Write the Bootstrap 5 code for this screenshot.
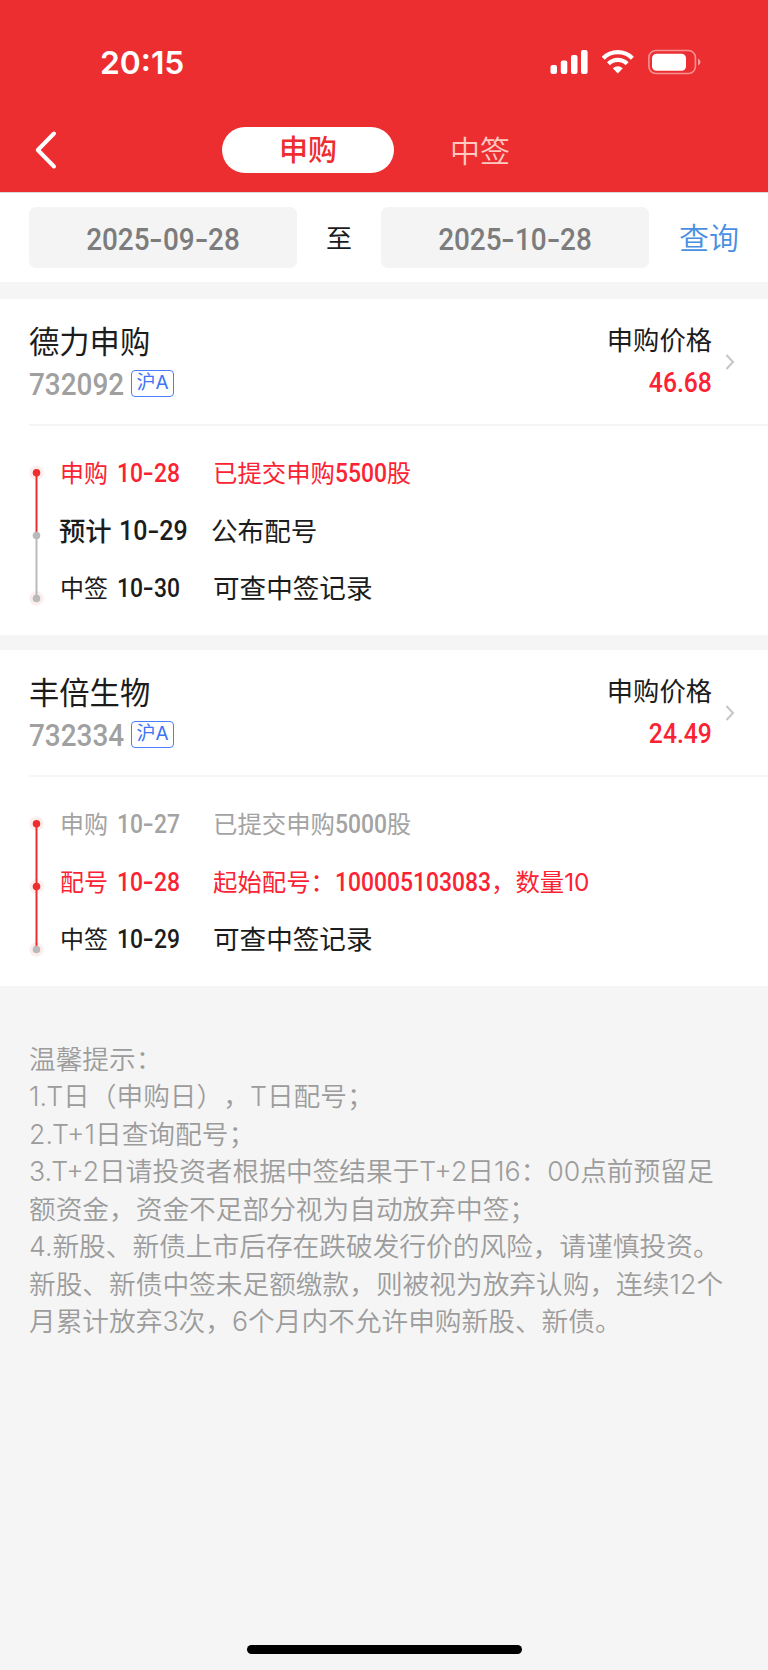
<!DOCTYPE html>
<html lang="zh-CN">
<head>
<meta charset="utf-8">
<meta name="viewport" content="width=device-width, initial-scale=1">
<title>申购</title>
<link href="https://cdn.jsdelivr.net/npm/bootstrap@5.3.0/dist/css/bootstrap.min.css" rel="stylesheet">
<style>
body{background:#f5f5f5;font-family:Inter,"Noto Sans CJK SC",sans-serif;color:#1c1c1c;min-height:1670px;overflow-x:hidden;text-spacing-trim:space-all}
.app-head{background:#ed2e31;height:192px;color:#fff}
.status-row{height:124px;padding:0 66px 0 100px}
.clock{font-size:31.8px;font-weight:600;line-height:40px;padding-top:1px}
.tab-row{height:52px;padding-left:34px}
.back-btn{width:24px;height:40px;margin-right:164px}
.tab-pill{width:172px;height:46px;line-height:48px;font-size:29px;text-align:center}
.tab-on{background:#fff;color:#ed2e31;font-weight:500}
.tab-off{color:#ffc9c2;font-weight:350;font-size:30px}
.din{font-family:Roboto,"Noto Sans CJK SC",sans-serif;font-weight:500;display:inline-block;transform:scaleX(.915);transform-origin:left}
.hy{display:inline-block;width:.48em;text-align:center;transform:scaleX(1.4)}
.filter-row{height:90px;padding:0 29px;border-top:1px solid #d9d9d9}
.date-box{width:268px;height:61px;line-height:63px;background:#f4f4f4;border-radius:7px;color:#7c7c7c;font-size:30.5px;text-align:center}
.date-box .din{transform-origin:center;font-weight:500}
.to-lbl{width:84px;font-size:26px;text-align:center;padding-top:2px}
.query{width:90px;font-size:30px;color:#4a90e2;text-align:right;padding-top:2px;font-weight:350}
.stock{height:336px;background:#fff}
.stock-top{height:127px;margin-left:29px;padding:22px 30px 0 0;border-bottom:2px solid #f5f5f5}
.s-name{font-size:30.3px;line-height:42px}
.s-code{font-size:30.5px;line-height:44px;color:#a0a0a0;margin-right:-9px}
.s-tag{height:27px;width:43px;border:1.5px solid #4a7dff;border-radius:4px;color:#3d73f5;font-size:19px;line-height:24px;text-align:center;margin:-3px 0 0 7px}
.p-lbl{font-size:26.3px;line-height:40px}
.p-val{font-size:27px;line-height:44px;color:#fb2333}
.p-val .din{transform-origin:right}
.chev{margin-left:13px;margin-right:3px}
.steps{padding:19px 0 0 28px}
.track{width:17px;height:145px;margin-top:19px;margin-right:15px}
.step{height:57.5px;line-height:57.5px;font-size:24px}
.s-what{width:57px;white-space:nowrap}
.s-date{width:96px;font-size:25px}
.s-info{white-space:nowrap;font-size:24.4px}
.s-info .din{font-size:25px;margin-right:-.2em}
.s-info .din-long{margin-right:-.58em}
.big-info{font-size:26.6px}
.cur .s-what{font-size:26.3px;font-weight:500;width:60px;margin-left:-1px}
.cur .s-date{font-size:27.3px;width:92px}
.c-red{color:#fb2333}.c-gray{color:#a3a3a3}
.tips{padding:54.5px 0 0 29px;font-size:26.7px;line-height:37.5px;color:#9c9c9c;white-space:nowrap;font-weight:350}
.home-bar{width:275px;height:9px;border-radius:5px;background:#000;bottom:16px;left:246.5px}
</style>
</head>
<body class="position-relative">
<header class="app-head">
  <div class="status-row d-flex align-items-center justify-content-between">
    <span class="clock">20:15</span>
    <svg width="152" height="26" viewBox="0 0 152 26" fill="#fff">
      <rect x="0.5" y="16" width="6.5" height="9" rx="2"/><rect x="10.8" y="11.5" width="6.5" height="13.5" rx="2"/><rect x="21" y="6" width="6.5" height="19" rx="2"/><rect x="31" y="1" width="6.6" height="24" rx="2"/>
      <g fill="none" stroke="#fff" stroke-width="4.2"><path d="M53.2 9.2A20.5 20.5 0 0 1 82.4 9.2"/><path d="M58.5 14.7A13 13 0 0 1 77.1 14.7"/></g>
      <path d="M62.8 19.3Q67.8 15.1 72.8 19.3L67.8 24.5Z"/>
      <rect x="98.9" y="1.5" width="46.5" height="23" rx="7" fill="none" stroke="#fff" stroke-opacity=".48" stroke-width="1.6"/>
      <rect x="102" y="4.7" width="34" height="17" rx="4.5"/><path d="M148 9.5Q150.6 10.5 150.6 13T148 16.5Z" opacity=".5"/>
    </svg>
  </div>
  <nav class="tab-row d-flex align-items-center">
    <svg class="back-btn" viewBox="0 0 24 40" fill="none" stroke="#fff" stroke-width="4" stroke-linecap="round" stroke-linejoin="round"><path d="M20 3.5L3.8 20L20 36.5"/></svg>
    <span class="tab-pill tab-on rounded-pill">申购</span>
    <span class="tab-pill tab-off">中签</span>
  </nav>
</header>

<div class="filter-row bg-white d-flex align-items-center">
  <div class="date-box"><span class="din">2025<span class="hy">-</span>09<span class="hy">-</span>28</span></div>
  <span class="to-lbl">至</span>
  <div class="date-box"><span class="din">2025<span class="hy">-</span>10<span class="hy">-</span>28</span></div>
  <span class="query">查询</span>
</div>

<section class="stock" style="margin-top:17px">
  <div class="stock-top d-flex justify-content-between">
    <div>
      <div class="s-name">德力申购</div>
      <div class="d-flex align-items-center"><span class="s-code din">732092</span><span class="s-tag">沪A</span></div>
    </div>
    <div class="d-flex">
      <div class="text-end"><div class="p-lbl">申购价格</div><div class="p-val"><span class="din">46.68</span></div></div>
      <svg class="chev" width="10" height="80" viewBox="0 0 10 80" fill="none" stroke="#c6c6c6" stroke-width="2"><path d="M1.5 34L8 41L1.5 48"/></svg>
    </div>
  </div>
  <div class="steps d-flex">
    <svg class="track" viewBox="0 0 17 145">
      <g fill="#fdeeee"><circle cx="8.5" cy="8.7" r="7.2"/><circle cx="8.5" cy="134.5" r="7.2"/></g>
      <path d="M8.5 8.7V71.5" stroke="#ed2e31" stroke-width="2"/><path d="M8.5 71.5V134.5" stroke="#bababa" stroke-width="2"/>
      <circle cx="8.5" cy="8.7" r="3.8" fill="#ed2e31"/><g fill="#bababa"><circle cx="8.5" cy="71.5" r="3.8"/><circle cx="8.5" cy="134.5" r="3.8"/></g>
    </svg>
    <div>
      <div class="step d-flex c-red"><span class="s-what">申购</span><span class="s-date din">10<span class="hy">-</span>28</span><span class="s-info">已提交申购<span class="din">5500</span>股</span></div>
      <div class="step d-flex cur"><span class="s-what">预计</span><span class="s-date din">10<span class="hy">-</span>29</span><span class="s-info big-info">公布配号</span></div>
      <div class="step d-flex"><span class="s-what">中签</span><span class="s-date din">10<span class="hy">-</span>30</span><span class="s-info big-info">可查中签记录</span></div>
    </div>
  </div>
</section>

<section class="stock" style="margin-top:15px">
  <div class="stock-top d-flex justify-content-between">
    <div>
      <div class="s-name">丰倍生物</div>
      <div class="d-flex align-items-center"><span class="s-code din">732334</span><span class="s-tag">沪A</span></div>
    </div>
    <div class="d-flex">
      <div class="text-end"><div class="p-lbl">申购价格</div><div class="p-val"><span class="din">24.49</span></div></div>
      <svg class="chev" width="10" height="80" viewBox="0 0 10 80" fill="none" stroke="#c6c6c6" stroke-width="2"><path d="M1.5 34L8 41L1.5 48"/></svg>
    </div>
  </div>
  <div class="steps d-flex">
    <svg class="track" viewBox="0 0 17 145">
      <g fill="#fdeeee"><circle cx="8.5" cy="8.7" r="7.2"/><circle cx="8.5" cy="71.5" r="7.2"/><circle cx="8.5" cy="134.5" r="7.2"/></g>
      <path d="M8.5 8.7V134.5" stroke="#ed2e31" stroke-width="2"/>
      <g fill="#ed2e31"><circle cx="8.5" cy="8.7" r="3.8"/><circle cx="8.5" cy="71.5" r="3.8"/></g><circle cx="8.5" cy="134.5" r="3.8" fill="#bababa"/>
    </svg>
    <div>
      <div class="step d-flex c-gray"><span class="s-what">申购</span><span class="s-date din">10<span class="hy">-</span>27</span><span class="s-info">已提交申购<span class="din">5000</span>股</span></div>
      <div class="step d-flex c-red"><span class="s-what">配号</span><span class="s-date din">10<span class="hy">-</span>28</span><span class="s-info">起始配号：<span class="din din-long">100005103083</span>，数量10</span></div>
      <div class="step d-flex"><span class="s-what">中签</span><span class="s-date din">10<span class="hy">-</span>29</span><span class="s-info big-info">可查中签记录</span></div>
    </div>
  </div>
</section>

<div class="tips">
  <div>温馨提示：</div>
  <div>1.T日（申购日），T日配号；</div>
  <div>2.T+1日查询配号；</div>
  <div>3.T+2日请投资者根据中签结果于T+2日16：00点前预留足</div>
  <div>额资金，资金不足部分视为自动放弃中签；</div>
  <div>4.新股、新债上市后存在跌破发行价的风险，请谨慎投资。</div>
  <div>新股、新债中签未足额缴款，则被视为放弃认购，连续12个</div>
  <div>月累计放弃3次，6个月内不允许申购新股、新债。</div>
</div>
<div class="home-bar position-absolute"></div>
<script src="https://cdn.jsdelivr.net/npm/bootstrap@5.3.0/dist/js/bootstrap.bundle.min.js"></script>
</body>
</html>
